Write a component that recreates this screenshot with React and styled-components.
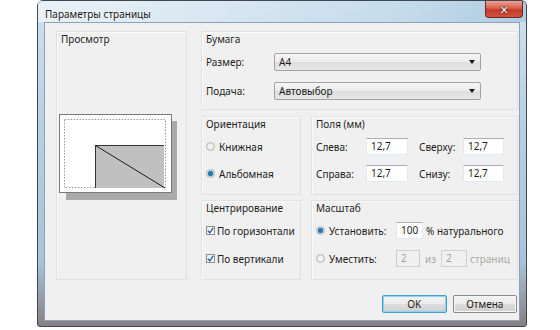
import styled, { createGlobalStyle } from "styled-components";

const Global = createGlobalStyle`
  body {
    margin: 0;
    background: #ffffff;
    font-family: "Noto Sans", "DejaVu Sans", sans-serif;
    font-size: 10px;
    color: #1e1e1e;
  }
`;

const Page = styled.div`
  width: 560px;
  height: 330px;
  padding-left: 37px;
  box-sizing: border-box;
`;

const Window = styled.div`
  width: 490px;
  height: 327px;
  box-sizing: border-box;
  border: 1px solid #3d4853;
  border-radius: 6px 6px 3px 3px;
  background: linear-gradient(180deg, #cfe1ee 0%, #b7cfe2 40%, #a9c3da 80%, #8a7f82 100%);
  display: flex;
  flex-direction: column;
  padding: 0 6px 5px 6px;
`;

const TitleBar = styled.div`
  height: 22px;
  display: flex;
  align-items: flex-start;
  justify-content: space-between;
  background: linear-gradient(90deg, rgba(255,255,255,0.55) 0%, rgba(255,255,255,0.2) 40%, rgba(160,200,225,0.2) 75%, rgba(120,170,205,0.35) 100%);
  margin: 0 -6px;
  padding: 0 3px 0 7px;
`;

const Caption = styled.span`
  padding-top: 6px;
  font-size: 10px;
  color: #1b1b1b;
  text-shadow: 0 0 6px #ffffff;
`;

const CloseButton = styled.div`
  width: 36px;
  height: 16px;
  border: 1px solid #6e2a24;
  border-top: none;
  border-radius: 0 0 4px 4px;
  background: linear-gradient(180deg, #eba394 0%, #d7604d 45%, #c1392a 55%, #d4523c 100%);
  display: flex;
  align-items: center;
  justify-content: center;
  color: #ffffff;
  font-size: 11px;
  font-weight: bold;
  text-shadow: 0 0 2px #3a0a05, 0 0 1px #3a0a05;
`;

const Client = styled.div`
  flex: 1;
  background: #f0f0f0;
  border: 1px solid #8aa3bd;
  display: grid;
  grid-template-columns: 131px 1fr;
  grid-template-rows: auto auto;
  align-content: start;
  column-gap: 14px;
  padding: 8px 6px 7px 11px;
`;

const Group = styled.div`
  border: 1px solid #dfe3e6;
  box-shadow: inset 1px 1px 0 #fafafa;
  padding: 1px 4px ${(p) => p.$bottom || 0}px 4px;
  display: flex;
  flex-direction: column;
`;

const GroupTitle = styled.div`
  height: 13px;
  line-height: 13px;
  color: #1e1e1e;
`;

const Rows = styled.div`
  display: flex;
  flex-direction: column;
  margin-top: ${(p) => p.$top || 7}px;
  gap: ${(p) => p.$gap || 10}px;
`;

const Row = styled.div`
  height: ${(p) => p.$h || 17}px;
  display: flex;
  align-items: center;
`;

const PreviewArea = styled.div`
  flex: 1;
  display: flex;
  align-items: center;
  justify-content: flex-start;
  margin-left: -2px;
  padding-bottom: 10px;
`;

const RightColumn = styled.div`
  display: flex;
  flex-direction: column;
  gap: 6px;
`;

const Pairs = styled.div`
  display: grid;
  grid-template-columns: 100px 1fr;
  column-gap: 10px;
  row-gap: 5px;
`;

const Label = styled.span`
  width: ${(p) => p.$w}px;
  flex: none;
  color: ${(p) => (p.$disabled ? "#a8a8a8" : "#1e1e1e")};
`;

const Select = styled.div`
  width: 207px;
  height: 18px;
  box-sizing: border-box;
  border: 1px solid #a3a3a3;
  border-radius: 2px;
  background: linear-gradient(180deg, #f6f6f6 0%, #ebebeb 50%, #dedede 51%, #e6e6e6 100%);
  display: flex;
  align-items: center;
  justify-content: space-between;
  padding: 0 5px 0 4px;
`;

const Arrow = styled.span`
  width: 0;
  height: 0;
  border-left: 3px solid transparent;
  border-right: 3px solid transparent;
  border-top: 4px solid #1a1a1a;
`;

const Input = styled.div`
  width: ${(p) => p.$w || 42}px;
  height: 17px;
  box-sizing: border-box;
  background: ${(p) => (p.$disabled ? "#f0f0f0" : "#ffffff")};
  border: 1px solid ${(p) => (p.$disabled ? "#cfcfcf" : "#e3e9ef")};
  border-top-color: ${(p) => (p.$disabled ? "#cfcfcf" : "#abadb3")};
  padding: 1px 4px;
  line-height: 13px;
  color: ${(p) => (p.$disabled ? "#a0a0a0" : "#1e1e1e")};
  flex: none;
`;

const Radio = styled.span`
  width: 9px;
  height: 9px;
  border-radius: 50%;
  box-sizing: border-box;
  border: 1px solid #b8b8b8;
  background: ${(p) =>
    p.$on
      ? "radial-gradient(circle, #2b7ab8 0 2.5px, #c9dbe9 3px)"
      : "radial-gradient(circle, #f2f2f2 0 2px, #d9d9d9 4px)"};
  margin-right: 4px;
  flex: none;
`;

const Check = styled.span`
  width: 9px;
  height: 9px;
  box-sizing: border-box;
  border: 1px solid #8f8f8f;
  background: linear-gradient(135deg, #e8eef3, #ffffff);
  margin-right: 2px;
  flex: none;
  display: flex;
  align-items: center;
  justify-content: center;
`;

const Small = styled.span`
  margin: 0 ${(p) => p.$m || 4}px;
  color: ${(p) => (p.$disabled ? "#a8a8a8" : "#1e1e1e")};
`;

const ButtonRow = styled.div`
  grid-column: 1 / 3;
  display: flex;
  justify-content: flex-end;
  gap: 6px;
  margin-top: 15px;
  padding-right: 1px;
`;

const Button = styled.div`
  width: ${(p) => p.$w}px;
  height: 18px;
  box-sizing: border-box;
  border: 1px solid ${(p) => (p.$default ? "#3c9fd4" : "#8b8b8b")};
  box-shadow: ${(p) => (p.$default ? "inset 0 0 0 1px #8fd3f2" : "inset 0 0 0 1px #f8f8f8")};
  border-radius: 2px;
  background: linear-gradient(180deg, #f3f3f3 0%, #ebebeb 50%, #dddddd 51%, #cfcfcf 100%);
  display: flex;
  align-items: center;
  justify-content: center;
`;

const Tick = () => (
  <svg width="7" height="7" viewBox="0 0 7 7">
    <path d="M0.8 3.6 L2.8 5.8 L6.2 0.8" fill="none" stroke="#2b5fa8" strokeWidth="1.4" />
  </svg>
);

const PagePreview = () => (
  <svg width="120" height="88" viewBox="0 0 120 88">
    <rect x="7" y="7" width="111" height="79" fill="#a9a9a9" />
    <rect x="0.5" y="0.5" width="112" height="78" fill="#ffffff" stroke="#7a7a7a" />
    <rect x="5.5" y="5.5" width="101" height="68" fill="none" stroke="#9a9a9a" strokeDasharray="1.5 1.5" />
    <rect x="36" y="31" width="69" height="43" fill="#c0c0c0" />
    <path d="M36.5 74 L36.5 31.5 L105 31.5" fill="none" stroke="#333333" />
    <path d="M36.5 31.5 L106 74" fill="none" stroke="#1a1a1a" />
  </svg>
);

export default function App() {
  return (
    <Page>
      <Global />
      <Window>
        <TitleBar>
          <Caption>Параметры страницы</Caption>
          <CloseButton>✕</CloseButton>
        </TitleBar>
        <Client>
          <Group>
            <GroupTitle>Просмотр</GroupTitle>
            <PreviewArea>
              <PagePreview />
            </PreviewArea>
          </Group>

          <RightColumn>
            <Group $bottom={9}>
              <GroupTitle>Бумага</GroupTitle>
              <Rows $top={7} $gap={11}>
                <Row $h={18}>
                  <Label $w={68}>Размер:</Label>
                  <Select>
                    <span>A4</span>
                    <Arrow />
                  </Select>
                </Row>
                <Row $h={18}>
                  <Label $w={68}>Подача:</Label>
                  <Select>
                    <span>Автовыбор</span>
                    <Arrow />
                  </Select>
                </Row>
              </Rows>
            </Group>

            <Pairs>
              <Group $bottom={12}>
                <GroupTitle>Ориентация</GroupTitle>
                <Rows>
                  <Row>
                    <Radio />
                    <span>Книжная</span>
                  </Row>
                  <Row>
                    <Radio $on />
                    <span>Альбомная</span>
                  </Row>
                </Rows>
              </Group>

              <Group $bottom={12}>
                <GroupTitle>Поля (мм)</GroupTitle>
                <Rows>
                  <Row>
                    <Label $w={50}>Слева:</Label>
                    <Input>12,7</Input>
                    <Label $w={44} style={{ marginLeft: 11 }}>Сверху:</Label>
                    <Input $w={41}>12,7</Input>
                  </Row>
                  <Row>
                    <Label $w={50}>Справа:</Label>
                    <Input>12,7</Input>
                    <Label $w={44} style={{ marginLeft: 11 }}>Снизу:</Label>
                    <Input $w={41}>12,7</Input>
                  </Row>
                </Rows>
              </Group>

              <Group $bottom={12}>
                <GroupTitle>Центрирование</GroupTitle>
                <Rows $gap={11}>
                  <Row>
                    <Check>
                      <Tick />
                    </Check>
                    <span>По горизонтали</span>
                  </Row>
                  <Row>
                    <Check>
                      <Tick />
                    </Check>
                    <span>По вертикали</span>
                  </Row>
                </Rows>
              </Group>

              <Group $bottom={12}>
                <GroupTitle>Масштаб</GroupTitle>
                <Rows $gap={11}>
                  <Row>
                    <Radio $on />
                    <Label $w={67}>Установить:</Label>
                    <Input $w={27}>100</Input>
                    <Small $m={3}>% натурального</Small>
                  </Row>
                  <Row>
                    <Radio />
                    <Label $w={67}>Уместить:</Label>
                    <Input $w={24} $disabled>2</Input>
                    <Small $disabled $m={5}>из</Small>
                    <Input $w={26} $disabled>2</Input>
                    <Small $disabled $m={3}>страниц</Small>
                  </Row>
                </Rows>
              </Group>
            </Pairs>
          </RightColumn>

          <ButtonRow>
            <Button $w={65} $default>OK</Button>
            <Button $w={64}>Отмена</Button>
          </ButtonRow>
        </Client>
      </Window>
    </Page>
  );
}
